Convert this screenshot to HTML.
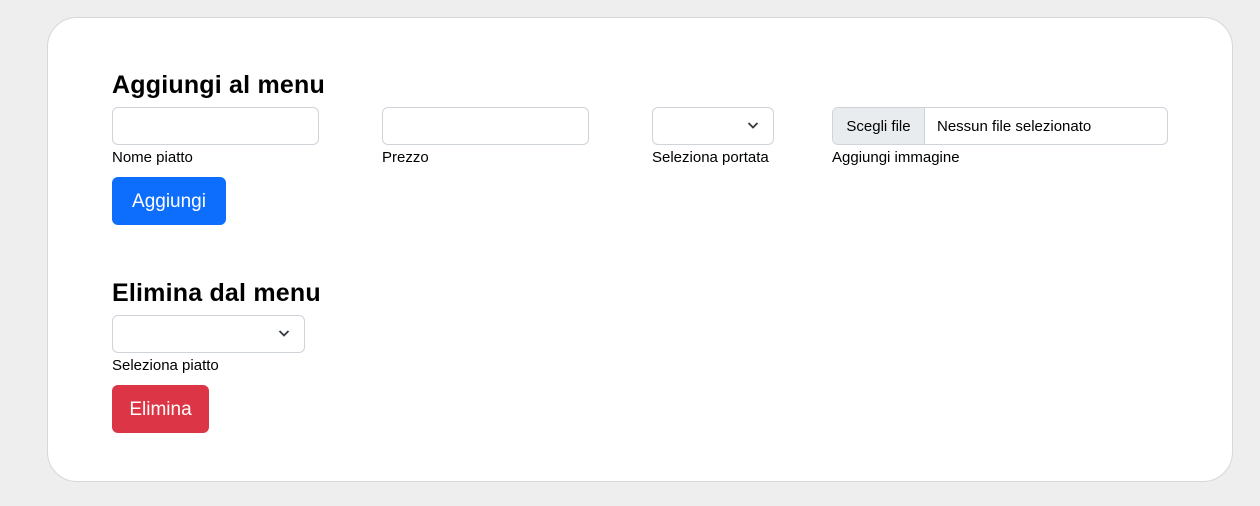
<!DOCTYPE html>
<html><head><style>
body{margin:0;background:#eeeeee;width:1260px;height:506px;position:relative;font-family:"Liberation Sans",sans-serif;color:#000;overflow:hidden}
.card{position:absolute;left:47px;top:17px;width:1184px;height:463px;background:#fff;border:1px solid #d8d8d8;border-radius:30px}
.a{position:absolute}
h2{margin:0;font-size:25px;font-weight:bold;position:absolute;line-height:32px;letter-spacing:0.2px}
.in{position:absolute;height:36px;border:1px solid #ced4da;border-radius:6px;background:#fff}
.lb{position:absolute;font-size:15px;line-height:18px}
.btn{position:absolute;color:#fff;font-size:19px;border-radius:6px;display:flex;align-items:center;justify-content:center;height:46px;padding-top:2px}
.chev{position:absolute;right:14px;top:12px}
</style></head><body>
<div class="card"></div>
<h2 style="left:112px;top:69px">Aggiungi al menu</h2>
<div class="in" style="left:112px;top:107px;width:205px"></div>
<div class="in" style="left:382px;top:107px;width:205px"></div>
<div class="in" style="left:652px;top:107px;width:120px"><svg class="chev" width="12" height="10" viewBox="0 0 12 10"><path d="M1.5 3l4.5 4.5 4.5-4.5" fill="none" stroke="#343a40" stroke-width="1.8"/></svg></div>
<div class="in" style="left:832px;top:107px;width:334px;overflow:hidden;font-size:15px">
<div class="a" style="left:0;top:0;width:91px;height:36px;background:#e9ecef;border-right:1px solid #ced4da;display:flex;align-items:center;justify-content:center">Scegli file</div>
<div class="a" style="left:104px;top:10px">Nessun file selezionato</div></div>
<div class="lb" style="left:112px;top:149px">Nome piatto</div>
<div class="lb" style="left:382px;top:149px">Prezzo</div>
<div class="lb" style="left:652px;top:149px">Seleziona portata</div>
<div class="lb" style="left:832px;top:149px">Aggiungi immagine</div>
<div class="btn" style="left:112px;top:177px;width:114px;background:#0d6efd">Aggiungi</div>
<h2 style="left:112px;top:277px">Elimina dal menu</h2>
<div class="in" style="left:112px;top:315px;width:191px"><svg class="chev" width="12" height="10" viewBox="0 0 12 10"><path d="M1.5 3l4.5 4.5 4.5-4.5" fill="none" stroke="#343a40" stroke-width="1.8"/></svg></div>
<div class="lb" style="left:112px;top:357px">Seleziona piatto</div>
<div class="btn" style="left:112px;top:385px;width:97px;background:#dc3545">Elimina</div>
</body></html>
